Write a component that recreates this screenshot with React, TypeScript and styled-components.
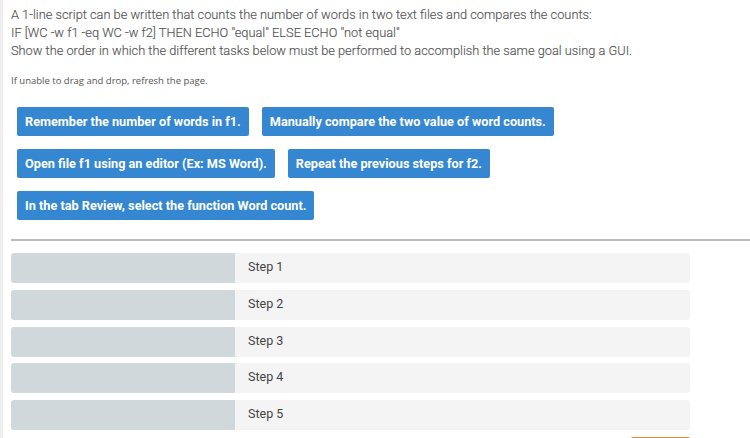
import React from "react";
import styled, { createGlobalStyle } from "styled-components";

const Global = createGlobalStyle`
    html, body {
        margin: 0;
        padding: 0;
        background: #fff;
    }
    body {
        font-family: Roboto, "Liberation Sans", sans-serif;
    }
`;

const Page = styled.div`
    border-left: 3px solid #eeeeee;
    height: 438px;
    box-sizing: border-box;
    padding: 6px 0 0 0;
    overflow: hidden;
`;

const Prompt = styled.div`
    padding-left: 8px;
    color: #555;
    font-size: 12.8px;
    font-weight: 300;
    line-height: 18px;
    -webkit-text-stroke: 0.15px #555;
`;

const Note = styled.p`
    margin: 15px 0 0 8px;
    color: #555;
    font-family: "Open Sans", sans-serif;
    font-size: 9.5px;
    line-height: 12px;
`;

const Bank = styled.div`
    display: flex;
    flex-direction: column;
    gap: 13px;
    padding-left: 14px;
    margin-top: 20px;
`;

const BankRow = styled.div`
    display: flex;
    gap: 13px;
`;

const Choice = styled.div`
    background: #3487d0;
    color: #fff;
    font-size: 12.7px;
    font-weight: 700;
    line-height: 29px;
    height: 29px;
    padding: 0 8px;
    border-radius: 2px;
    white-space: nowrap;
    cursor: grab;
`;

const Divider = styled.hr`
    margin: 19px 0 0 8px;
    border: 0;
    height: 2px;
    background: #bbbbbb;
`;

const Steps = styled.div`
    display: flex;
    flex-direction: column;
    gap: 6.75px;
    margin: 12px 0 0 8px;
    width: 679px;
`;

const Step = styled.div`
    display: flex;
    height: 30px;
    border-radius: 3px;
    overflow: hidden;
`;

const Slot = styled.div`
    width: 224px;
    background: #d0d8db;
`;

const Label = styled.div`
    flex: 1;
    background: #f4f4f4;
    color: #444;
    font-size: 12.5px;
    line-height: 28px;
    padding-left: 13px;
`;

const Footer = styled.div`
    display: flex;
    justify-content: flex-end;
    width: 687px;
    margin-top: 6.5px;
`;

const Submit = styled.div`
    width: 59px;
    height: 20px;
    border-top: 2px solid #e58a2f;
    border-radius: 2px 2px 0 0;
`;

const choices = [
    ["Remember the number of words in f1.", "Manually compare the two value of word counts."],
    ["Open file f1 using an editor (Ex: MS Word).", "Repeat the previous steps for f2."],
    ["In the tab Review, select the function Word count."],
];

export default function App() {
    return (
        <Page>
            <Global />
            <Prompt>
                A 1-line script can be written that counts the number of words in two text files and compares the counts:
                <br />
                IF [WC -w f1 -eq WC -w f2] THEN ECHO "equal" ELSE ECHO "not equal"
                <br />
                Show the order in which the different tasks below must be performed to accomplish the same goal using a GUI.
            </Prompt>
            <Note>If unable to drag and drop, refresh the page.</Note>
            <Bank>
                {choices.map((row, i) => (
                    <BankRow key={i}>
                        {row.map((c) => (
                            <Choice key={c}>{c}</Choice>
                        ))}
                    </BankRow>
                ))}
            </Bank>
            <Divider />
            <Steps>
                {[1, 2, 3, 4, 5].map((n) => (
                    <Step key={n}>
                        <Slot />
                        <Label>Step {n}</Label>
                    </Step>
                ))}
            </Steps>
            <Footer>
                <Submit />
            </Footer>
        </Page>
    );
}
